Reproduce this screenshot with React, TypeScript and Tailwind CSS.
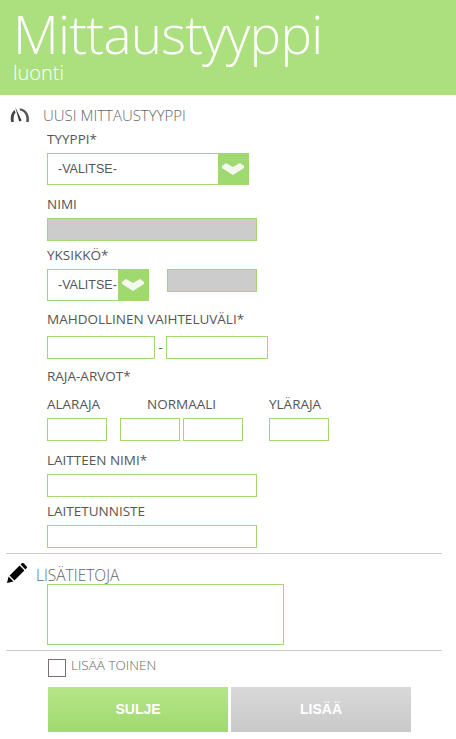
const font = { light: "font-['Open_Sans',sans-serif] font-light", label: "font-['Open_Sans',sans-serif]" };

function Label({ children, className = '' }: { children: string; className?: string }) {
  return <div className={`${font.label} h-[18px] text-[13.5px] leading-[18px] text-[#555] whitespace-nowrap ${className}`}>{children}</div>;
}

function Input({ className = '', disabled = false }: { className?: string; disabled?: boolean }) {
  return <div className={`h-[23px] border border-[#a0d96f] ${disabled ? 'bg-[#cccccc]' : 'bg-white'} ${className}`} />;
}

function Select({ className = '' }: { className?: string }) {
  return (
    <div className={`flex h-8 border border-[#a0d96f] bg-white ${className}`}>
      <span className="flex-1 pl-[10px] font-['Liberation_Sans',sans-serif] text-[12.5px] leading-[30px] text-[#555] whitespace-nowrap">-VALITSE-</span>
      <span className="flex w-[30px] items-center justify-center bg-[#a0d96f]">
        <svg width="22" height="12" viewBox="0 0 22 12">
          <path d="M0 3 L4 0 L11 4 L18 0 L22 3 L22 5 L11 12 L0 5 Z" fill="#f4f8ee" />
        </svg>
      </span>
    </div>
  );
}

export default function App() {
  return (
    <div className="h-[739px] w-[456px] overflow-hidden bg-white">
      <header className="h-[95px] bg-[#acdf7d] pl-[13px] text-white">
        <h1 className={`${font.light} pt-[5px] text-[53px] leading-[58px] tracking-[-0.7px]`}>Mittaustyyppi</h1>
        <p className={`${font.light} -mt-[3px] text-[20px] leading-[26px]`}>luonti</p>
      </header>

      <div className="flex h-[35px] items-start pl-[10px] pt-[10px]">
        <svg width="20" height="15" viewBox="0 0 20 15" className="mt-[2px] shrink-0">
          <path d="M1.2 15 C0 9.5 1.4 5.5 4.6 3 L5.6 5.4 C3.8 7.5 3.2 10.5 3.8 15 Z" fill="#444" />
          <path d="M18.8 15 C20 8 16.5 2 9.5 1.2 L10.2 3.4 C15 4.4 17.2 9 16.2 15 Z" fill="#555" />
          <path d="M5.2 0 L11.6 13.6 L9.2 14.6 Z" fill="#333" />
        </svg>
        <span className={`${font.light} ml-[13px] text-[15px] leading-[20px] text-[#666]`}>UUSI MITTAUSTYYPPI</span>
      </div>

      <main className="pl-[47px]">
        <Label>TYYPPI*</Label>
        <Select className="mt-[5px] w-[202px]" />
        <Label className="mt-[10px]">NIMI</Label>
        <Input disabled className="mt-[5px] w-[210px]" />
        <Label className="mt-[5px]">YKSIKKÖ*</Label>
        <div className="mt-[5px] flex items-start">
          <Select className="w-[102px]" />
          <Input disabled className="ml-[18px] w-[90px]" />
        </div>
        <Label className="mt-[9px]">MAHDOLLINEN VAIHTELUVÄLI*</Label>
        <div className="mt-[8px] flex items-center">
          <Input className="w-[108px]" />
          <span className={`${font.label} w-[11px] text-center text-[13px] text-[#555]`}>-</span>
          <Input className="w-[102px]" />
        </div>
        <Label className="mt-[8px]">RAJA-ARVOT*</Label>
        <div className="mt-[10px] flex">
          <Label className="w-[100px]">ALARAJA</Label>
          <Label className="w-[122px]">NORMAALI</Label>
          <Label>YLÄRAJA</Label>
        </div>
        <div className="mt-[5px] flex">
          <Input className="w-[60px]" />
          <Input className="ml-[13px] w-[60px]" />
          <Input className="ml-[3px] w-[60px]" />
          <Input className="ml-[26px] w-[60px]" />
        </div>
        <Label className="mt-[10px]">LAITTEEN NIMI*</Label>
        <Input className="mt-[5px] w-[210px]" />
        <Label className="mt-[5px]">LAITETUNNISTE</Label>
        <Input className="mt-[5px] w-[210px]" />
      </main>

      <hr className="ml-[6px] mt-[5px] w-[436px] border-[#cccccc]" />
      <div className="flex h-[30px] pl-[7px] pt-[9px]">
        <svg width="20" height="20" viewBox="0 0 20 20" className="shrink-0">
          <path d="M0 20 L1.6 13.6 L6.4 18.4 Z" fill="#000" />
          <path d="M2.6 12.6 L12.6 2.6 L17.4 7.4 L7.4 17.4 Z" fill="#000" />
          <path d="M13.6 1.6 L15 0.3 C15.5 -0.1 16 -0.1 16.5 0.3 L19.7 3.5 C20.1 4 20.1 4.5 19.7 5 L18.4 6.4 Z" fill="#000" />
        </svg>
        <span className={`${font.light} ml-[9px] pt-[2px] text-[15.5px] leading-[20px] text-[#666]`}>LISÄTIETOJA</span>
      </div>
      <div className="ml-[47px] h-[61px] w-[237px] border border-[#a0d96f]" />
      <hr className="ml-[6px] mt-[5px] w-[436px] border-[#cccccc]" />

      <div className="ml-[48px] mt-[8px] flex">
        <div className="h-[18px] w-[18px] border border-[#7a7070]" />
        <span className={`${font.light} ml-[5px] text-[13.5px] leading-[13px] text-[#666]`}>LISÄÄ TOINEN</span>
      </div>
      <div className="ml-[48px] mt-[10px] flex gap-[3px]">
        <button className="h-[45px] w-[180px] bg-gradient-to-b from-[#b6e688] to-[#a0d96f] font-['Liberation_Sans',sans-serif] text-[14px] font-bold text-white">SULJE</button>
        <button className="h-[45px] w-[180px] bg-gradient-to-b from-[#d9d9d9] to-[#c9c9c9] font-['Liberation_Sans',sans-serif] text-[14px] font-bold text-white">LISÄÄ</button>
      </div>
    </div>
  );
}
